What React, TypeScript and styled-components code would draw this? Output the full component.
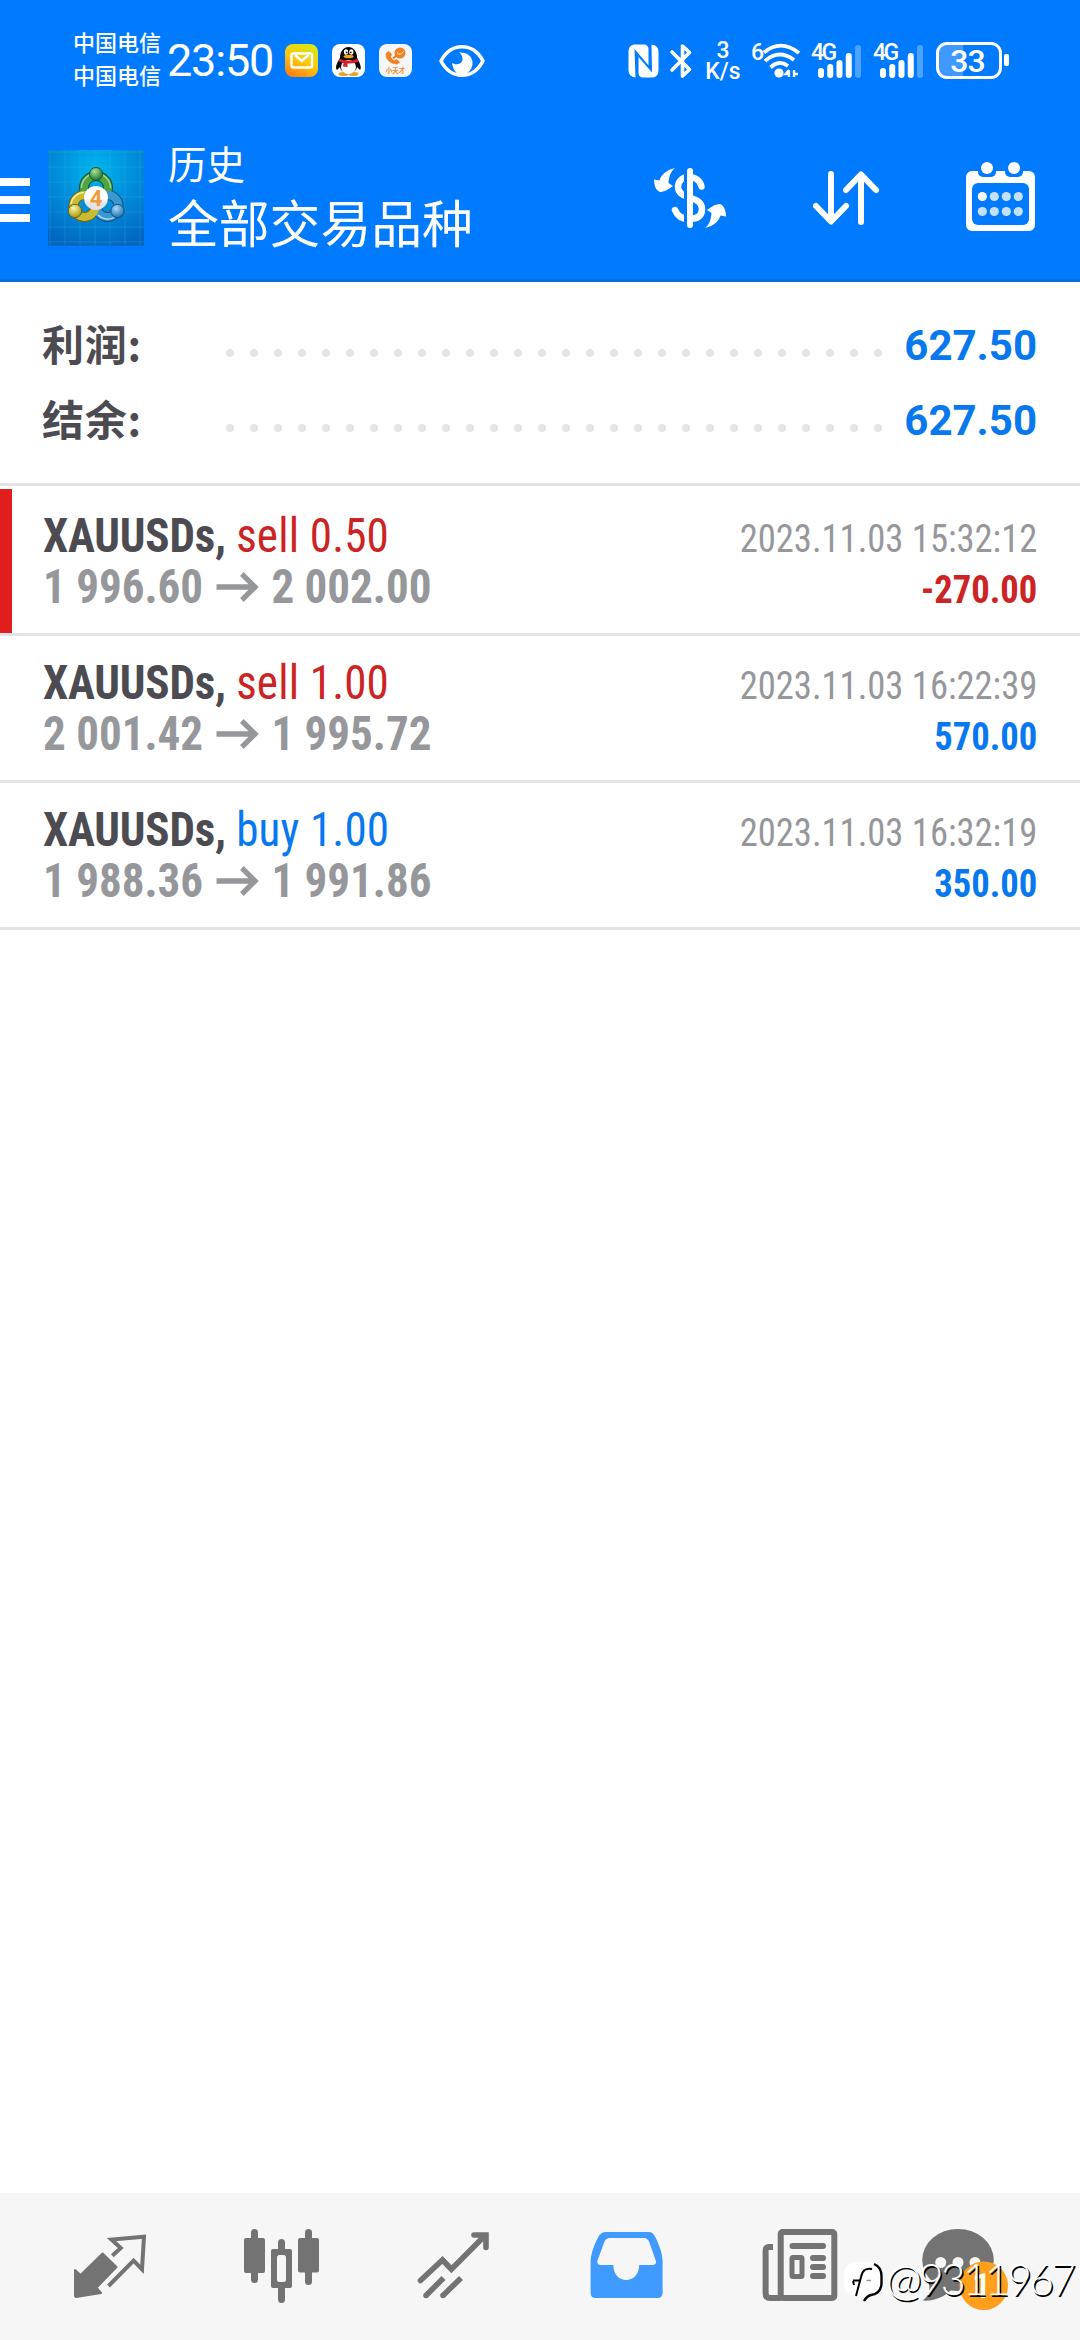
import React from "react";
import styled, { createGlobalStyle } from "styled-components";

const BLUE = "#007aff";
const GREY = "#737373";

const GlobalStyle = createGlobalStyle`
  * { box-sizing: border-box; }
  body { margin: 0; background: #fff; font-family: Roboto, "Noto Sans CJK SC", sans-serif; }
  svg { display: block; flex: none; overflow: visible; }
`;

const Screen = styled.div`
  width: 1080px;
  height: 2340px;
  display: flex;
  flex-direction: column;
  overflow: hidden;
  background: #fff;
`;

/* ---------- status bar ---------- */

const StatusBar = styled.div`
  height: 120px;
  background: ${BLUE};
  color: #fff;
  display: flex;
  justify-content: space-between;
  padding: 0 78px 0 73px;
`;

const StatusGroup = styled.div`
  display: flex;
  align-items: center;
  height: 121px;
`;

const Carriers = styled.div`
  width: 88px;
  padding-bottom: 5px;
  font: 500 22px/33px "Noto Sans CJK SC", sans-serif;
  white-space: nowrap;
`;

const Clock = styled.div`
  width: 105px;
  margin: 0 12px 0 6px;
  padding-top: 1px;
  font: 400 45px/60px Roboto, sans-serif;
  letter-spacing: -1.2px;
  white-space: nowrap;
`;

const AppIcons = styled.div`
  display: flex;
  gap: 14px;
  margin: 0 27px 0 1px;
`;

const NetSpeed = styled.div`
  width: 36px;
  margin: 0 10px 0 13px;
  text-align: center;
  font: 500 23px/21px Roboto, sans-serif;
`;

const Sup = styled.div`
  width: 12px;
  height: 38px;
  font: 500 23px/22px Roboto, sans-serif;
  letter-spacing: -1.5px;
  white-space: nowrap;
`;

const Battery = styled.div`
  position: relative;
  width: 66px;
  height: 37px;
  margin-left: 11px;
  padding-right: 3px;
  border: 3px solid #fff;
  border-radius: 11px;
  background: linear-gradient(90deg, #4099ff 24px, transparent 24px);
  text-align: center;
  font: 500 32px/32px Roboto, sans-serif;
  letter-spacing: -1px;
  &::after {
    content: "";
    position: absolute;
    right: -10px;
    top: 9px;
    width: 5px;
    height: 12px;
    border-radius: 2px;
    background: #fff;
  }
`;

function MailIcon() {
  return (
    <svg width="33" height="33" viewBox="0 0 33 33">
      <defs>
        <linearGradient id="mail" x1="0.2" y1="1" x2="0.7" y2="0">
          <stop offset="0" stopColor="#ff7a10" />
          <stop offset="0.5" stopColor="#fdc80c" />
          <stop offset="1" stopColor="#d8e619" />
        </linearGradient>
      </defs>
      <rect width="33" height="33" rx="8" fill="url(#mail)" />
      <rect x="6.5" y="9.5" width="20.5" height="14" rx="2" fill="none" stroke="#fff" strokeWidth="2.4" />
      <path d="M10 11 L16.7 17 L23.5 11" fill="none" stroke="#fff" strokeWidth="2.4" />
    </svg>
  );
}

function PenguinIcon() {
  return (
    <svg width="33" height="33" viewBox="0 0 33 33">
      <rect width="33" height="33" rx="8" fill="#fff" />
      <ellipse cx="11.5" cy="30" rx="5" ry="2" fill="#f0a020" />
      <ellipse cx="21.5" cy="30" rx="5" ry="2" fill="#f0a020" />
      <path d="M8 14 C4 20 3 24 5 26 L8 23 C9 31 24 31 25 23 L28 26 C30 24 28 19 25 14 Z" fill="#080808" />
      <ellipse cx="16.5" cy="23" rx="7.5" ry="7" fill="#fff" />
      <path d="M8 15 C7 -1 26 -1 25 15 Z" fill="#080808" />
      <ellipse cx="14" cy="8" rx="2.1" ry="2.8" fill="#fff" />
      <ellipse cx="19.3" cy="8" rx="2.1" ry="2.8" fill="#fff" />
      <circle cx="14.6" cy="8.3" r="0.9" />
      <circle cx="18.8" cy="8.3" r="0.9" />
      <ellipse cx="16.6" cy="12.5" rx="5" ry="1.8" fill="#f5a017" />
      <path d="M7 14.500 Q16.500 19 26 14.500 L26 18 Q20 20 15.500 19.500 L15.500 23 L11 22.500 L11.500 19 L7 17.500 Z" fill="#d81e2a" />
    </svg>
  );
}

const TinyLabel = styled.text`
  font: 700 6.5px "Noto Sans CJK SC", sans-serif;
  fill: #f08a24;
`;

function PhoneAppIcon() {
  return (
    <svg width="33" height="33" viewBox="0 0 33 33">
      <rect width="33" height="33" rx="8" fill="#f5f6f8" />
      <path d="M7.500 9 C6 13 9 19.500 18.500 20 L20.500 18 L17.500 15.500 L15.500 17 C13.500 16 12 14.500 11.500 12.500 L12.500 10.500 L10 7.500 Z" fill="#f08222" stroke="#f08222" strokeLinejoin="round" />
      <path d="M14 14.500 L18 11" stroke="#f08222" strokeWidth="2" />
      <circle cx="21" cy="9" r="5.5" fill="#f08222" />
      <path d="M18 8.500 Q21 12.500 24.500 7.500" fill="none" stroke="#f5f6f8" strokeWidth="0.9" />
      <TinyLabel x="6.8" y="28.5">小天才</TinyLabel>
    </svg>
  );
}

function EyeIcon() {
  return (
    <svg width="46" height="32" viewBox="0 0 46 32">
      <path d="M2 16 C12 -3 34 -3 44 16 C34 35 12 35 2 16 Z" fill="none" stroke="#fff" strokeWidth="3.6" strokeLinejoin="round" />
      <path d="M13 18 C14 24 17 30 23 30 C30 29 34 23 33.500 17 C33 11 28 7 20 7.500 C24 10 25 16 21 18.500 C18 20 15 19 13 18 Z" fill="#fff" />
    </svg>
  );
}

function NfcIcon() {
  return (
    <svg width="31" height="34" viewBox="0 0 31 34">
      <path d="M6 0.500 L17 0.500 Q20.500 1.500 20.500 5 L20.500 21.500 L6.500 5 L7.500 33.500 Q0.500 33 0.500 26 L0.500 8 Q0.500 1 6 0.500 Z" fill="#fff" />
      <path d="M23.500 0.500 Q30.500 1 30.500 8 L30.500 26 Q30.500 33 25 33.500 L14 33.500 Q10.500 32.500 10.500 29 L10.500 13 L24 28.500 Z" fill="#fff" />
    </svg>
  );
}

const BluetoothSvg = styled.svg`
  margin-left: 11px;
`;

function BluetoothIcon() {
  return (
    <BluetoothSvg width="22" height="36" viewBox="0 0 22 36">
      <path d="M2 9 L19.500 26.500 L12.500 33 L12.500 3 L19.500 9.500 L2 27" fill="none" stroke="#fff" strokeWidth="3.6" strokeLinecap="round" strokeLinejoin="round" />
    </BluetoothSvg>
  );
}

function WifiIcon() {
  return (
    <svg width="38" height="36" viewBox="0 0 38 36">
      <g fill="none" stroke="#fff" strokeWidth="3.8">
        <path d="M1 9.500 Q18 -4.500 36 10" />
        <path d="M2 18 Q16 5.500 31 17" />
        <path d="M7.500 24.500 Q16 16.500 25 23" />
      </g>
      <circle cx="16" cy="30" r="4.6" fill="#fff" />
      <path d="M26 27 V34 M31 27 V34 M26 27 L22.500 31 H26 M31 31 H35" stroke="#fff" strokeWidth="2.3" fill="none" />
    </svg>
  );
}

const BARS = [10, 14, 18, 25, 33];

function SignalBars() {
  return (
    <svg width="43" height="34" viewBox="0 0 43 34">
      {BARS.map((h, i) => (
        <rect key={i} x={i * 9.25} y={34 - h} width="6" height={h} rx="3" fill="#fff" opacity={i === 4 ? 0.3 : 1} />
      ))}
    </svg>
  );
}

const Signal = styled.div`
  position: relative;
  width: 62px;
  height: 34px;
  padding-left: 17px;
`;

const SignalTag = styled.span`
  position: absolute;
  left: 10px;
  top: -2px;
  font: 500 23px/22px Roboto, sans-serif;
  letter-spacing: -2.5px;
`;

/* ---------- title bar ---------- */

const TitleBar = styled.header`
  height: 162px;
  padding: 0 45px 0 0;
  display: flex;
  background: ${BLUE};
  border-bottom: 3px solid #0a6fe0;
  color: #fff;
`;

const Hamburger = styled.div`
  width: 30px;
  display: flex;
  flex-direction: column;
  gap: 10px;
  padding-top: 58px;
  margin-right: 18px;
`;

const HamburgerBar = styled.span`
  height: 8px;
  background: #fff;
`;

const LogoBox = styled.div`
  padding-top: 30px;
  margin-right: 24px;
`;

const Titles = styled.div`
  flex: 1;
  font-family: "Noto Sans CJK SC", sans-serif;
  white-space: nowrap;
  padding-top: 17px;
`;

const TitleSmall = styled.div`
  font-size: 38.5px;
  line-height: 50px;
`;

const TitleLarge = styled.div`
  font-size: 50.8px;
  line-height: 69px;
`;

const Actions = styled.div`
  display: flex;
  align-items: flex-start;
  padding-top: 42px;
  gap: 84px;
`;

const LogoDigit = styled.text`
  font: 700 22px Roboto, sans-serif;
  fill: #f59a3c;
  text-anchor: middle;
`;

function Logo() {
  const grid = [2, 17, 32, 47, 62, 77, 92];
  return (
    <svg width="96" height="96" viewBox="0 0 96 96">
      <defs>
        <radialGradient id="lbg" cx="0.5" cy="0.2" r="0.85">
          <stop offset="0" stopColor="#00b6ec" />
          <stop offset="0.45" stopColor="#0090dc" />
          <stop offset="1" stopColor="#0266c0" />
        </radialGradient>
        <radialGradient id="gball" cx="0.4" cy="0.3" r="0.7">
          <stop offset="0" stopColor="#a5e09a" />
          <stop offset="1" stopColor="#1f7a2c" />
        </radialGradient>
        <radialGradient id="yball" cx="0.4" cy="0.3" r="0.7">
          <stop offset="0" stopColor="#fff6a0" />
          <stop offset="1" stopColor="#a59312" />
        </radialGradient>
        <radialGradient id="bball" cx="0.4" cy="0.3" r="0.7">
          <stop offset="0" stopColor="#a8dcf8" />
          <stop offset="1" stopColor="#1a6fb0" />
        </radialGradient>
        <linearGradient id="disc" x1="0" y1="0" x2="0" y2="1">
          <stop offset="0.5" stopColor="#fff" />
          <stop offset="0.75" stopColor="#e2e2e4" />
        </linearGradient>
      </defs>
      <rect width="96" height="96" fill="url(#lbg)" />
      {grid.map((g) => (
        <path key={g} d={`M${g} 0 V96 M0 ${g} H96`} stroke="#4cc4f4" strokeWidth="0.8" opacity="0.25" />
      ))}
      <g fill="none">
        <g strokeWidth="10" stroke="#14532c">
          <circle cx="48" cy="38" r="12" />
          <circle cx="36.5" cy="56" r="11" stroke="#6f6510" />
          <circle cx="59.5" cy="56" r="11" stroke="#164f80" />
        </g>
        <circle cx="48" cy="38" r="12" stroke="#4fa345" strokeWidth="8" />
        <circle cx="59.5" cy="56" r="11" stroke="#3b97d0" strokeWidth="8" />
        <circle cx="36.5" cy="56" r="11" stroke="#c9bb35" strokeWidth="8" />
        <path d="M33.500 38 A14.500 14.500 0 0 1 62.500 38" stroke="#a4d890" strokeWidth="1.4" />
        <path d="M23 54 A13.500 13.500 0 0 1 36 42.500" stroke="#f7efa0" strokeWidth="1.4" />
        <path d="M50 65 A13.500 13.500 0 0 0 66 67.500" stroke="#b5e2fa" strokeWidth="1.4" />
      </g>
      <circle cx="48" cy="24" r="6.5" fill="url(#gball)" stroke="#14532c" />
      <circle cx="27" cy="61" r="6.7" fill="url(#yball)" stroke="#6f6510" />
      <circle cx="69.5" cy="61" r="6.7" fill="url(#bball)" stroke="#164f80" />
      <circle cx="48" cy="48" r="12" fill="url(#disc)" />
      <LogoDigit x="48" y="55.5">4</LogoDigit>
    </svg>
  );
}

function ConvertIcon() {
  const arrow = "M23 3 C14 5 9 10 7.500 15.500 L2 14.500 C2 20 4 26.500 8.500 27 C13 27 18 23 21 21 L16.500 18 C17 11 19 6 23 3 Z";
  return (
    <svg width="74" height="66" viewBox="0 -3 74 66">
      <path d="M49.500 21.500 C48 15 43 12 37 12 C29 12 26 17.500 26 22 C26 35 50 30 50 44 C50 51 45 54 37 54 C29 54 25 50 23 45" fill="none" stroke="#fff" strokeWidth="6.5" strokeLinecap="round" />
      <rect x="32" y="3" width="9" height="60" fill={BLUE} />
      <rect x="35" y="3" width="6" height="60" rx="3" fill="#fff" />
      <path d={arrow} fill="#fff" />
      <path d={arrow} fill="#fff" transform="rotate(180 38 33)" />
    </svg>
  );
}

function SortIcon() {
  return (
    <svg width="72" height="66" viewBox="0 -6 72 66">
      <g fill="none" stroke="#fff" strokeWidth="6" strokeLinecap="round" strokeLinejoin="round">
        <path d="M21 6 V53 M6 38 L21 53.500 L36 38" />
        <path d="M51 54 V7 M36 22 L51 6.500 L66 22" />
      </g>
    </svg>
  );
}

function CalendarIcon() {
  return (
    <svg width="69" height="69" viewBox="0 0 69 69">
      <rect y="9" width="69" height="60" rx="6" fill="#fff" />
      <rect x="6" y="21" width="57" height="42" rx="6" fill={BLUE} />
      {[21, 48].map((x) => (
        <g key={x}>
          <rect x={x - 9} y="-3" width="18" height="18" rx="5" fill={BLUE} />
          <circle cx={x} cy="6" r="6" fill="#fff" />
        </g>
      ))}
      {[34.5, 49.5].map((y) =>
        [16.3, 28.3, 40.3, 52.3].map((x) => (
          <circle key={`${x}-${y}`} cx={x} cy={y} r="4.6" fill={x < 20 && y < 40 ? "#fff" : "#c4e1ff"} />
        ))
      )}
    </svg>
  );
}

/* ---------- summary ---------- */

const Summary = styled.section`
  height: 204px;
  padding: 26px 43px 0 42px;
  border-bottom: 3px solid #e3e3e3;
`;

const SummaryRow = styled.div`
  height: 75px;
  display: flex;
  align-items: center;
`;

const SummaryLabel = styled.div`
  width: 184px;
  height: 75px;
  color: #4b4b51;
  font: 700 42px/70px "Noto Sans CJK SC", sans-serif;
  letter-spacing: 0.7px;
`;

const Leader = styled.div`
  width: 672px;
  height: 8px;
  margin-top: 15px;
  background: radial-gradient(circle at 4px 4px, #e4e4e4 3.7px, transparent 4.3px) 0 0 / 24px 8px repeat-x;
`;

const SummaryValue = styled.div`
  flex: 1;
  text-align: right;
  color: #0878ee;
  font: 700 42px/75px Roboto, sans-serif;
`;

/* ---------- deals ---------- */

const DealList = styled.main`
  flex: 1;
  padding-top: 3px;
`;

const Deal = styled.div<{ $marked?: boolean }>`
  height: 147px;
  display: flex;
  justify-content: space-between;
  padding: 21px 43px 0 43px;
  border-bottom: 3px solid #e3e3e3;
  background: linear-gradient(90deg, ${(p) => (p.$marked ? "#e01e1e" : "#fff")} 12px, #fff 12px);
  font-family: "Roboto Condensed", Roboto, sans-serif;
  font-stretch: 75%;
  line-height: 51px;
  white-space: nowrap;
`;

const DealLeft = styled.div`
  font-size: 48px;
  transform: scaleX(0.938);
  transform-origin: left top;
`;

const Instrument = styled.span`
  font-weight: 700;
  color: #4b4b51;
  letter-spacing: -0.2px;
`;

const Side = styled.span<{ $buy: boolean }>`
  color: ${(p) => (p.$buy ? "#0878ee" : "#cc2424")};
  letter-spacing: 0.2px;
`;

const Prices = styled.div`
  display: flex;
  align-items: center;
  font-weight: 700;
  color: #96979b;
  gap: 14px;
`;

const DealRight = styled.div`
  padding-top: 4px;
  text-align: right;
  font-size: 39px;
  transform: scaleX(0.938);
  transform-origin: right top;
`;

const When = styled.div`
  color: #96979b;
`;

const Profit = styled.div<{ $loss: boolean }>`
  font-weight: 700;
  color: ${(p) => (p.$loss ? "#cc2424" : "#0878ee")};
`;

function PriceArrow() {
  return (
    <svg width="45" height="30" viewBox="0 0 45 30">
      <path d="M0 15 H40 M27 2 L41 15 L27 28" fill="none" stroke="#96979b" strokeWidth="5.5" />
    </svg>
  );
}

const DEALS = [
  { side: "sell", volume: "0.50", from: "1 996.60", to: "2 002.00", when: "2023.11.03 15:32:12", profit: "-270.00", marked: true },
  { side: "sell", volume: "1.00", from: "2 001.42", to: "1 995.72", when: "2023.11.03 16:22:39", profit: "570.00" },
  { side: "buy", volume: "1.00", from: "1 988.36", to: "1 991.86", when: "2023.11.03 16:32:19", profit: "350.00" },
];

/* ---------- bottom navigation ---------- */

const Nav = styled.nav`
  position: relative;
  height: 147px;
  padding: 0 24px;
  display: flex;
  background: #f6f6f6;
`;

const NavItem = styled.div`
  width: 172px;
  display: flex;
  justify-content: center;
  padding-top: 31px;
`;

function NavSvg({ children }: { children: React.ReactNode }) {
  return (
    <svg width="84" height="84" viewBox="0 0 84 84">
      {children}
    </svg>
  );
}

function QuotesIcon() {
  return (
    <NavSvg>
      <path d="M7 46 L12.600 51 L34.600 29.500 L48.500 43 L28.500 63.700 L33 69 L8 73 L7 72 Z" fill={GREY} stroke={GREY} strokeWidth="2" strokeLinejoin="round" />
      <path d="M44.300 31.700 L52.700 24 L43.500 15.500 L76 12.700 L74 45.300 L65.600 36.700 L40.500 62" fill="none" stroke={GREY} strokeWidth="4" />
    </NavSvg>
  );
}

function CandlesIcon() {
  return (
    <NavSvg>
      <g fill={GREY}>
        <rect x="4" y="14" width="21" height="35" rx="2" />
        <rect x="11" y="5" width="7" height="54" rx="3.5" />
        <rect x="58" y="14" width="21" height="34.5" rx="2" />
        <rect x="65" y="5" width="7" height="56" rx="3.5" />
        <rect x="38" y="15" width="7" height="64" rx="3.5" />
        <rect x="31" y="25" width="21" height="39" rx="2" />
      </g>
      <rect x="37" y="31" width="9" height="27" rx="2.5" fill="#f6f6f6" />
    </NavSvg>
  );
}

function TrendIcon() {
  return (
    <NavSvg>
      <g fill="none" stroke={GREY} strokeWidth="5.6">
        <path d="M8.500 56.500 L30.500 36 L39.400 45.300 L73 11.500 M62 11 H74 V23.500" strokeLinecap="round" strokeLinejoin="miter" />
        <path d="M14 71.500 L31.500 54 M31 71.500 L49 54" />
      </g>
      <circle cx="14" cy="71.5" r="2.8" fill={GREY} />
      <circle cx="31" cy="71.5" r="2.8" fill={GREY} />
    </NavSvg>
  );
}

function InboxIcon() {
  return (
    <NavSvg>
      <path
        fillRule="evenodd"
        fill="#419aff"
        d="M22 8 H64 C68 8 70 10 71.500 13.500 C76 22 78.600 31 78.600 38 V69 Q78.600 74 73.600 74 H11.600 Q6.600 74 6.600 69 V38 C6.600 31 9.500 22 14 13.500 C15.500 10 18 8 22 8 Z M26 14 Q22 14 20.500 17.500 L13.500 36.500 Q12.500 41 17 41 H29.300 C29.500 61 55 61 55.200 41 H68.500 Q73 41 71.700 36.500 L65 17.500 Q63.500 14 59.500 14 Z"
      />
    </NavSvg>
  );
}

function NewsIcon() {
  return (
    <NavSvg>
      <g fill="none" stroke={GREY} strokeWidth="6">
        <rect x="24.7" y="8" width="53.6" height="66" rx="2" />
        <path d="M17 23 H13 Q9.600 23 9.600 27 V69 Q9.600 74 14 74 H25" />
        <path d="M36.500 22 H67 M57 34 H67 M57 43 H67 M57 52 H67" strokeLinecap="round" />
      </g>
      <rect x="36" y="33.5" width="10" height="19" rx="1" fill="none" stroke={GREY} strokeWidth="5" />
    </NavSvg>
  );
}

const BadgeText = styled.text`
  font: 500 35px Roboto, sans-serif;
  fill: #fff;
  text-anchor: middle;
`;

function ChatIcon() {
  return (
    <NavSvg>
      <ellipse cx="30" cy="36" rx="35.8" ry="31" fill={GREY} />
      <path d="M-5.500 76.500 C1 72 3 66 0 56 L24 65 C16 74 4 77.500 -5.500 76.500 Z" fill={GREY} />
      {[12.7, 30, 47].map((x) => (
        <circle key={x} cx={x} cy="38.5" r="5.5" fill="#f6f6f6" />
      ))}
      <circle cx="55.7" cy="61.7" r="24.3" fill="#ff9f1c" />
      <BadgeText x="54" y="73.5">1</BadgeText>
    </NavSvg>
  );
}

const Watermark = styled.div`
  position: absolute;
  left: 844px;
  top: 68px;
  display: flex;
  color: #fff;
  white-space: nowrap;
`;

const WatermarkText = styled.span`
  margin-left: 2px;
  font: 300 43px/36px Lato, sans-serif;
  letter-spacing: -2.9px;
  text-shadow: 1.5px 1.5px 0.5px #000;
`;

function WatermarkLogo() {
  return (
    <svg width="40" height="44" viewBox="0 0 40 44">
      <path d="M12 1 H24 Q37 2 37 14 V22 Q37 33 27 34 L22 40 L18 35 H12 Q0 34 0 23 V14 Q0 2 12 1 Z" fill="#fff" />
      <path d="M30 3 Q37.500 6 37.500 15 V23 Q36.500 33 27 34 Q23 35 20 40" fill="none" stroke="#000" strokeWidth="2.4" />
      <path d="M28 8 Q19 6 17 16 L12 35 M9 20 L10 24 M9 19.500 H17" fill="none" stroke="#000" strokeWidth="2" />
      <path d="M22.500 19.500 H27" stroke="#999" strokeWidth="1.5" />
    </svg>
  );
}

export default function App() {
  return (
    <Screen>
      <GlobalStyle />
      <StatusBar>
        <StatusGroup>
          <Carriers>
            <div>中国电信</div>
            <div>中国电信</div>
          </Carriers>
          <Clock>23:50</Clock>
          <AppIcons>
            <MailIcon />
            <PenguinIcon />
            <PhoneAppIcon />
          </AppIcons>
          <EyeIcon />
        </StatusGroup>
        <StatusGroup>
          <NfcIcon />
          <BluetoothIcon />
          <NetSpeed>
            <div>3</div>
            <div>K/s</div>
          </NetSpeed>
          <Sup>6</Sup>
          <WifiIcon />
          <Signal>
            <SignalTag>4G</SignalTag>
            <SignalBars />
          </Signal>
          <Signal>
            <SignalTag>4G</SignalTag>
            <SignalBars />
          </Signal>
          <Battery>33</Battery>
        </StatusGroup>
      </StatusBar>

      <TitleBar>
        <Hamburger>
          <HamburgerBar />
          <HamburgerBar />
          <HamburgerBar />
        </Hamburger>
        <LogoBox>
          <Logo />
        </LogoBox>
        <Titles>
          <TitleSmall>历史</TitleSmall>
          <TitleLarge>全部交易品种</TitleLarge>
        </Titles>
        <Actions>
          <ConvertIcon />
          <SortIcon />
          <CalendarIcon />
        </Actions>
      </TitleBar>

      <Summary>
        <SummaryRow>
          <SummaryLabel>利润:</SummaryLabel>
          <Leader />
          <SummaryValue>627.50</SummaryValue>
        </SummaryRow>
        <SummaryRow>
          <SummaryLabel>结余:</SummaryLabel>
          <Leader />
          <SummaryValue>627.50</SummaryValue>
        </SummaryRow>
      </Summary>

      <DealList>
        {DEALS.map((d) => (
          <Deal key={d.when} $marked={d.marked}>
            <DealLeft>
              <div>
                <Instrument>XAUUSDs,</Instrument>{" "}
                <Side $buy={d.side === "buy"}>
                  {d.side} {d.volume}
                </Side>
              </div>
              <Prices>
                <span>{d.from}</span>
                <PriceArrow />
                <span>{d.to}</span>
              </Prices>
            </DealLeft>
            <DealRight>
              <When>{d.when}</When>
              <Profit $loss={d.profit.startsWith("-")}>{d.profit}</Profit>
            </DealRight>
          </Deal>
        ))}
      </DealList>

      <Nav>
        <NavItem><QuotesIcon /></NavItem>
        <NavItem><CandlesIcon /></NavItem>
        <NavItem><TrendIcon /></NavItem>
        <NavItem><InboxIcon /></NavItem>
        <NavItem><NewsIcon /></NavItem>
        <NavItem><ChatIcon /></NavItem>
        <Watermark>
          <WatermarkLogo />
          <WatermarkText>@9311967</WatermarkText>
        </Watermark>
      </Nav>
    </Screen>
  );
}
